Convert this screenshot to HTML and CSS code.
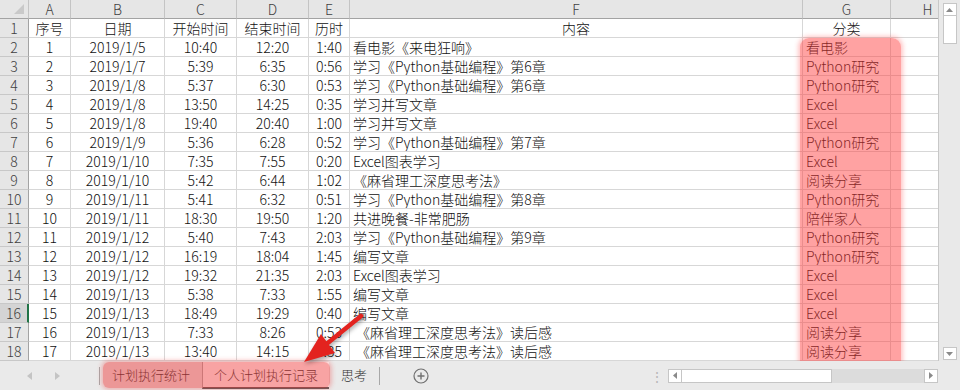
FILE: index.html
```html
<!DOCTYPE html>
<html lang="zh">
<head>
<meta charset="utf-8">
<title>个人计划执行记录</title>
<link rel="stylesheet" href="styles.css">
</head>
<body>
<div class="app">
  <div class="sheet">
    <div class="grid">
      <div class="cell corner"><svg width="12" height="12" viewBox="0 0 12 12"><polygon points="11,1 11,11 1,11" fill="#c9c9c9"/></svg></div>
      <div class="cell ch">A</div><div class="cell ch">B</div><div class="cell ch">C</div><div class="cell ch">D</div><div class="cell ch">E</div><div class="cell ch">F</div><div class="cell ch">G</div><div class="cell ch h">H</div>

      <div class="cell rh">1</div><div class="cell c">序号</div><div class="cell c">日期</div><div class="cell c">开始时间</div><div class="cell c">结束时间</div><div class="cell c">历时</div><div class="cell c">内容</div><div class="cell c">分类</div><div class="cell"></div>
      <div class="cell rh">2</div><div class="cell c">1</div><div class="cell c">2019/1/5</div><div class="cell c">10:40</div><div class="cell c">12:20</div><div class="cell c">1:40</div><div class="cell l">看电影《来电狂响》</div><div class="cell l">看电影</div><div class="cell"></div>
      <div class="cell rh">3</div><div class="cell c">2</div><div class="cell c">2019/1/7</div><div class="cell c">5:39</div><div class="cell c">6:35</div><div class="cell c">0:56</div><div class="cell l">学习《Python基础编程》第6章</div><div class="cell l">Python研究</div><div class="cell"></div>
      <div class="cell rh">4</div><div class="cell c">3</div><div class="cell c">2019/1/8</div><div class="cell c">5:37</div><div class="cell c">6:30</div><div class="cell c">0:53</div><div class="cell l">学习《Python基础编程》第6章</div><div class="cell l">Python研究</div><div class="cell"></div>
      <div class="cell rh">5</div><div class="cell c">4</div><div class="cell c">2019/1/8</div><div class="cell c">13:50</div><div class="cell c">14:25</div><div class="cell c">0:35</div><div class="cell l">学习并写文章</div><div class="cell l">Excel</div><div class="cell"></div>
      <div class="cell rh">6</div><div class="cell c">5</div><div class="cell c">2019/1/8</div><div class="cell c">19:40</div><div class="cell c">20:40</div><div class="cell c">1:00</div><div class="cell l">学习并写文章</div><div class="cell l">Excel</div><div class="cell"></div>
      <div class="cell rh">7</div><div class="cell c">6</div><div class="cell c">2019/1/9</div><div class="cell c">5:36</div><div class="cell c">6:28</div><div class="cell c">0:52</div><div class="cell l">学习《Python基础编程》第7章</div><div class="cell l">Python研究</div><div class="cell"></div>
      <div class="cell rh">8</div><div class="cell c">7</div><div class="cell c">2019/1/10</div><div class="cell c">7:35</div><div class="cell c">7:55</div><div class="cell c">0:20</div><div class="cell l">Excel图表学习</div><div class="cell l">Excel</div><div class="cell"></div>
      <div class="cell rh">9</div><div class="cell c">8</div><div class="cell c">2019/1/10</div><div class="cell c">5:42</div><div class="cell c">6:44</div><div class="cell c">1:02</div><div class="cell l">《麻省理工深度思考法》</div><div class="cell l">阅读分享</div><div class="cell"></div>
      <div class="cell rh">10</div><div class="cell c">9</div><div class="cell c">2019/1/11</div><div class="cell c">5:41</div><div class="cell c">6:32</div><div class="cell c">0:51</div><div class="cell l">学习《Python基础编程》第8章</div><div class="cell l">Python研究</div><div class="cell"></div>
      <div class="cell rh">11</div><div class="cell c">10</div><div class="cell c">2019/1/11</div><div class="cell c">18:30</div><div class="cell c">19:50</div><div class="cell c">1:20</div><div class="cell l">共进晚餐-非常肥肠</div><div class="cell l">陪伴家人</div><div class="cell"></div>
      <div class="cell rh">12</div><div class="cell c">11</div><div class="cell c">2019/1/12</div><div class="cell c">5:40</div><div class="cell c">7:43</div><div class="cell c">2:03</div><div class="cell l">学习《Python基础编程》第9章</div><div class="cell l">Python研究</div><div class="cell"></div>
      <div class="cell rh">13</div><div class="cell c">12</div><div class="cell c">2019/1/12</div><div class="cell c">16:19</div><div class="cell c">18:04</div><div class="cell c">1:45</div><div class="cell l">编写文章</div><div class="cell l">Python研究</div><div class="cell"></div>
      <div class="cell rh">14</div><div class="cell c">13</div><div class="cell c">2019/1/12</div><div class="cell c">19:32</div><div class="cell c">21:35</div><div class="cell c">2:03</div><div class="cell l">Excel图表学习</div><div class="cell l">Excel</div><div class="cell"></div>
      <div class="cell rh">15</div><div class="cell c">14</div><div class="cell c">2019/1/13</div><div class="cell c">5:38</div><div class="cell c">7:33</div><div class="cell c">1:55</div><div class="cell l">编写文章</div><div class="cell l">Excel</div><div class="cell"></div>
      <div class="cell rh sel">16</div><div class="cell c">15</div><div class="cell c">2019/1/13</div><div class="cell c">18:49</div><div class="cell c">19:29</div><div class="cell c">0:40</div><div class="cell l">编写文章</div><div class="cell l">Excel</div><div class="cell"></div>
      <div class="cell rh">17</div><div class="cell c">16</div><div class="cell c">2019/1/13</div><div class="cell c">7:33</div><div class="cell c">8:26</div><div class="cell c">0:53</div><div class="cell l ind">《麻省理工深度思考法》读后感</div><div class="cell l">阅读分享</div><div class="cell"></div>
      <div class="cell rh">18</div><div class="cell c">17</div><div class="cell c">2019/1/13</div><div class="cell c">13:40</div><div class="cell c">14:15</div><div class="cell c">0:35</div><div class="cell l ind">《麻省理工深度思考法》读后感</div><div class="cell l">阅读分享</div><div class="cell"></div>
    </div>
    <div class="vscroll">
      <div class="sbtn"><svg width="7" height="4" viewBox="0 0 7 4"><polygon points="0,4 7,4 3.5,0" fill="#8a8a8a"/></svg></div>
      <div class="vthumb"></div>
      <div class="vtrack"></div>
      <div class="sbtn"><svg width="7" height="4" viewBox="0 0 7 4"><polygon points="0,0 7,0 3.5,4" fill="#8a8a8a"/></svg></div>
    </div>
    <div class="mark-col"></div>
  </div>
  <div class="tabbar">
    <div class="nav">
      <svg width="5" height="8" viewBox="0 0 5 8"><polygon points="5,0 5,8 0,4" fill="#c4c4c4"/></svg>
      <svg width="5" height="8" viewBox="0 0 5 8"><polygon points="0,0 0,8 5,4" fill="#c4c4c4"/></svg>
    </div>
    <div class="sep"></div>
    <div class="tab">计划执行统计</div>
    <div class="tab active">个人计划执行记录</div>
    <div class="tab">思考</div>
    <div class="sep"></div>
    <div class="add"><svg width="16" height="16" viewBox="0 0 16 16"><circle cx="8" cy="8" r="7" fill="none" stroke="#707070" stroke-width="1.2"/><path d="M8 4.5v7M4.5 8h7" stroke="#707070" stroke-width="1.4"/></svg></div>
    <div class="dots">⋮</div>
    <div class="hscroll">
      <div class="hbtn"><svg width="4" height="7" viewBox="0 0 4 7"><polygon points="4,0 4,7 0,3.5" fill="#8a8a8a"/></svg></div>
      <div class="hthumb"></div>
      <div class="htrack"></div>
      <div class="hbtn"><svg width="4" height="7" viewBox="0 0 4 7"><polygon points="0,0 0,7 4,3.5" fill="#8a8a8a"/></svg></div>
    </div>
    <div class="mark-tabs"></div>
  </div>
  <svg class="arrow" width="960" height="390" viewBox="0 0 960 390">
    <line x1="361" y1="316" x2="324" y2="346" stroke="#e3231f" stroke-width="4.5" stroke-linecap="round"/>
    <polygon points="304,362 335,353 321,334" fill="#e3231f"/>
  </svg>
</div>
</body>
</html>
```

FILE: styles.css
```css
* { box-sizing: border-box; }
html, body { margin: 0; padding: 0; }
body {
  width: 960px;
  height: 390px;
  overflow: hidden;
  background: #fff;
  font-family: "Noto Sans CJK SC", "Microsoft YaHei", sans-serif;
}
.app {
  position: relative;
  width: 960px;
  height: 390px;
  overflow: hidden;
}
.sheet {
  position: relative;
  display: flex;
  height: 361px;
  overflow: hidden;
}
.grid {
  flex: none;
  width: 938px;
  overflow: hidden;
  display: grid;
  grid-template-columns: 29px 42px 94px 72px 72px 41px 453px 88px 74px;
  grid-template-rows: repeat(19, 19px);
  background: #fff;
}
.cell {
  border-right: 1px solid #d7d7d7;
  border-bottom: 1px solid #d7d7d7;
  font-size: 14px;
  font-weight: 300;
  line-height: 18px;
  color: #111;
  white-space: nowrap;
  overflow: hidden;
  padding: 0 3px;
}
.c { text-align: center; }
.l { text-align: left; }
.ind { padding-left: 6px; }
.corner {
  background: #e6e6e6;
  border-right-color: #c4c4c4;
  border-bottom-color: #a3a3a3;
  display: flex;
  align-items: flex-end;
  justify-content: flex-end;
  padding: 0 3px 3px 0;
}
.ch {
  background: #e6e6e6;
  color: #404040;
  text-align: center;
  border-right-color: #c4c4c4;
  border-bottom-color: #a3a3a3;
}
.rh {
  background: #e6e6e6;
  color: #404040;
  text-align: center;
  padding: 0;
  border-right-color: #a3a3a3;
  border-bottom-color: #c8c8c8;
}
.rh.sel {
  background: #d4d4d4;
  border-right: 2px solid #217346;
}
.vscroll {
  flex: none;
  width: 22px;
  background: #e9e9e9;
  border-left: 1px solid #c8c8c8;
  display: flex;
  flex-direction: column;
  align-items: center;
  padding: 3px 0 1px 0;
}
.sbtn {
  width: 14px;
  height: 13px;
  background: #fff;
  border: 1px solid #c6c6c6;
  display: flex;
  align-items: center;
  justify-content: center;
}
.vthumb {
  width: 14px;
  height: 28px;
  background: #fff;
  border: 1px solid #c6c6c6;
  border-top: none;
}
.vtrack { flex: 1; }
.mark-col {
  position: absolute;
  left: 800px;
  top: 38px;
  width: 101px;
  height: 340px;
  border-radius: 9px 9px 0 0;
  background: rgba(255, 58, 58, 0.47);
  box-shadow: 0 0 4px 2px rgba(255, 70, 70, 0.3);
}
.tabbar {
  position: relative;
  height: 29px;
  background: #eaeaea;
  display: flex;
  align-items: center;
}
.nav {
  width: 99px;
  display: flex;
  gap: 23px;
  padding-left: 27px;
  align-items: center;
}
.sep {
  width: 1px;
  height: 18px;
  background: #a8a8a8;
}
.tab {
  height: 27px;
  align-self: flex-start;
  margin-top: 1px;
  font-size: 13px;
  font-weight: 300;
  line-height: 26px;
  color: #333;
  padding: 0 12px;
}
.tab.active {
  background: #fff;
  border-left: 1px solid #b0b0b0;
  border-bottom: 2px solid #5a5a5a;
  padding: 0 11px;
}
.add {
  margin-left: 33px;
  display: flex;
  align-items: center;
}
.dots {
  margin-left: 221px;
  color: #b8b8b8;
  font-size: 14px;
  line-height: 14px;
  width: 10px;
}
.hscroll {
  margin-left: 8px;
  width: 270px;
  height: 14px;
  display: flex;
  background: #dcdcdc;
}
.hbtn {
  width: 14px;
  height: 14px;
  background: #fff;
  border: 1px solid #c6c6c6;
  display: flex;
  align-items: center;
  justify-content: center;
}
.hthumb {
  width: 150px;
  height: 14px;
  background: #fff;
  border: 1px solid #c6c6c6;
  border-left: none;
}
.htrack { flex: 1; }
.mark-tabs {
  position: absolute;
  left: 103px;
  top: 1px;
  width: 227px;
  height: 26px;
  border-radius: 6px;
  background: rgba(240, 50, 50, 0.45);
  box-shadow: 0 0 4px 2px rgba(240, 60, 60, 0.3);
}
.arrow {
  position: absolute;
  left: 0;
  top: 0;
  pointer-events: none;
  filter: drop-shadow(1px 2px 2px rgba(0, 0, 0, 0.35));
}
```
